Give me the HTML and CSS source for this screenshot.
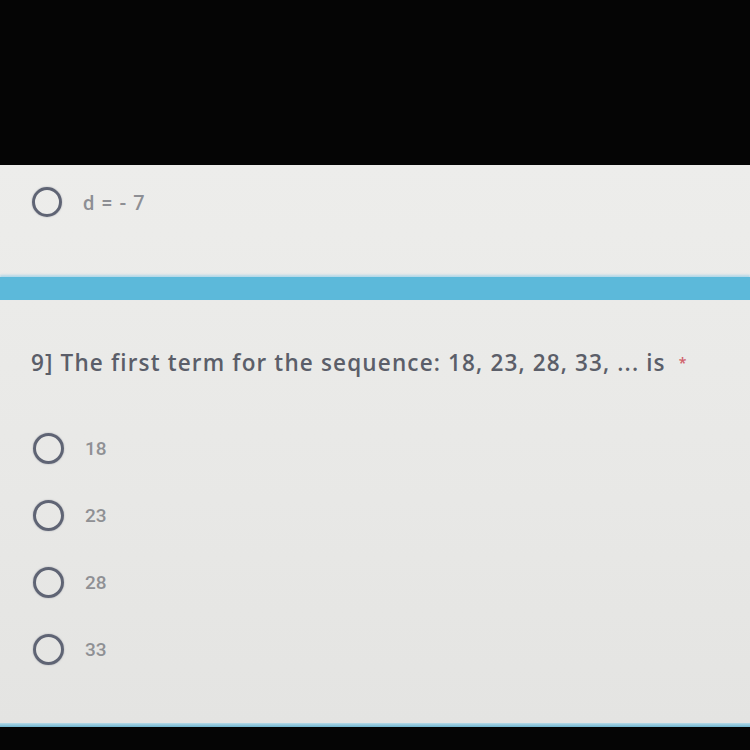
FILE: index.html
```html
<!DOCTYPE html>
<html>
<head>
<meta charset="utf-8">
<link rel="stylesheet" href="styles.css">
</head>
<body>
<div class="screen">
  <div class="top-black"></div>
  <div class="panel">
    <div class="prev-option">
      <span class="radio radio-big"></span>
      <span class="prev-label">d = - 7</span>
    </div>
    <div class="band"></div>
    <div class="question">
      <div class="q-title">9] The first term for the sequence: 18, 23, 28, 33, ... is <span class="req">*</span></div>
      <div class="options">
        <div class="option"><span class="radio"></span><span class="opt-label">18</span></div>
        <div class="option"><span class="radio"></span><span class="opt-label">23</span></div>
        <div class="option"><span class="radio"></span><span class="opt-label">28</span></div>
        <div class="option"><span class="radio"></span><span class="opt-label">33</span></div>
      </div>
    </div>
  </div>
  <div class="bottom-line"></div>
  <div class="bottom-black"></div>
</div>
</body>
</html>
```
FILE: styles.css
```css
html, body {
  margin: 0;
  padding: 0;
  background: #000;
}
.screen {
  width: 750px;
  height: 750px;
  display: flex;
  flex-direction: column;
  overflow: hidden;
}
.top-black {
  height: 165px;
  background: #050505;
  flex: none;
}
.panel {
  height: 558px;
  flex: none;
  background: linear-gradient(180deg, #ededeb 0%, #e8e8e6 60%, #e4e4e2 100%);
  display: flex;
  flex-direction: column;
}
.prev-option {
  display: flex;
  align-items: center;
  height: 74px;
  padding-left: 32px;
  gap: 21px;
}
.radio {
  width: 25px;
  height: 25px;
  border: 3.5px solid #5f6474;
  border-radius: 50%;
  flex: none;
  box-shadow: 0 0 1.5px rgba(95,100,116,0.6);
}
.radio-big {
  width: 24px;
  height: 24px;
}
.prev-label {
  font-family: Roboto, "Liberation Sans", sans-serif;
  font-size: 20px;
  font-weight: 500;
  color: #8d8f94;
  letter-spacing: 1px;
  padding-top: 1px;
}
.band {
  margin-top: 38px;
  height: 23px;
  background: #5cb9da;
  box-shadow: 0 -2px 2px rgba(140, 200, 230, 0.6);
}
.question {
  padding: 50px 0 0 31px;
}
.q-title {
  font-family: "Open Sans", Lato, sans-serif;
  font-weight: 600;
  font-size: 22.5px;
  letter-spacing: 1.15px;
  color: #5b5e69;
  line-height: 26px;
  white-space: nowrap;
}
.req {
  color: #d0606a;
  font-size: 14px;
  vertical-align: top;
  margin-left: 6px;
}
.options {
  display: flex;
  flex-direction: column;
  gap: 35px;
  margin-top: 56px;
  padding-left: 2px;
}
.option {
  display: flex;
  align-items: center;
  height: 32px;
  gap: 21px;
}
.opt-label {
  font-family: Roboto, "Liberation Sans", sans-serif;
  font-size: 19px;
  font-weight: 500;
  color: #8f9094;
}
.bottom-line {
  height: 4px;
  flex: none;
  background: linear-gradient(180deg, #b7dbe8, #6fb5cf);
}
.bottom-black {
  flex: 1;
  background: #050505;
}
```
